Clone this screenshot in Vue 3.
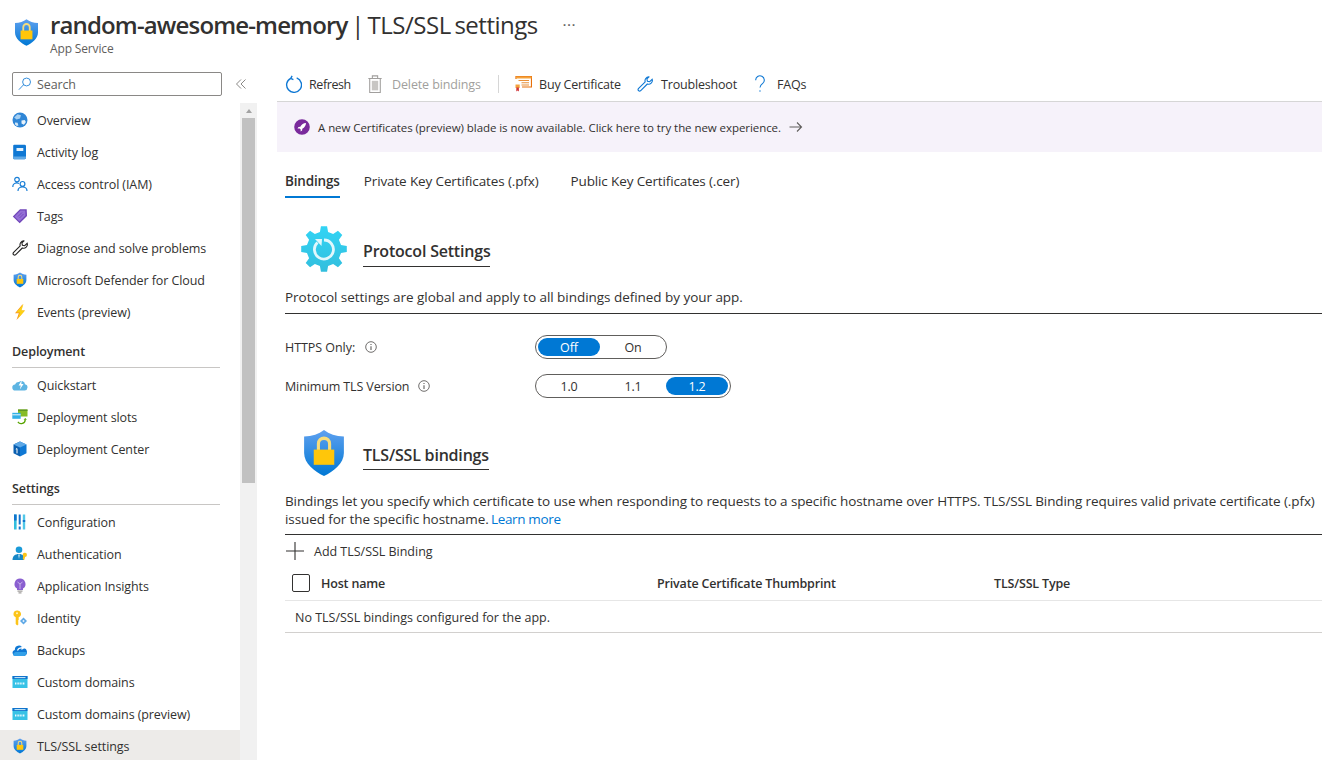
<script setup>
import { h } from 'vue'

const shield = [
  { d: 'M8 .6C6.3 1.9 4.2 2.6 1.6 2.7V8c0 3.4 3.4 6 6.4 7.4 3-1.4 6.4-4 6.4-7.4V2.7C11.8 2.6 9.7 1.9 8 .6z', fill: 'url(#shieldGrad)' },
  { d: 'M5.7 5v2.200h1V5.100a1.300 1.300 0 0 1 2.600 0v2.100h1V5a2.300 2.300 0 0 0-4.600 0z', fill: '#f7dc7a' },
  { d: 'M4.700 6.900h6.600v4.900H4.700z', fill: '#ffc60a' }
]

const wrenchD = 'M11.800 .9a3.800 3.800 0 0 0-3.600 5L1.400 12.700a1.500 1.500 0 0 0 2.100 2.100l6.800-6.800a3.800 3.800 0 0 0 4.900-4.700l-2.500 2.400-2.300-.5-.5-2.300 2.400-2.400z'

const paths = {
  shield,
  overview: [
    { d: 'M8 .5a7.500 7.500 0 1 0 0 15 7.500 7.500 0 0 0 0-15z', fill: '#2f86d6' },
    { d: 'M5.500 2.200 9 3.200 8 6.600 4.500 7.400 2.200 5.600z', fill: '#a5cff2' },
    { d: 'M9.500 8.500l3.200-.6 1.200 2.200-2 2.600-2.400-1.200z', fill: '#e8f3fb' },
    { d: 'M3 10.500l2.600.2.8 2.800-1.600.4L3 12.600z', fill: '#cfe6f8' }
  ],
  activity: [
    { d: 'M2.200 .8h10.400a1.400 1.400 0 0 1 1.400 1.400v11.600a1.400 1.400 0 0 1-1.400 1.400H2.200a1 1 0 0 1-1-1V1.800a1 1 0 0 1 1-1z', fill: '#0f78d4' },
    { d: 'M1.200 12.400h12.800v1.400a1.400 1.400 0 0 1-1.400 1.400H2.200a1 1 0 0 1-1-1z', fill: '#5ea8e6' },
    { d: 'M4.500 4h6.800v3H4.500z', fill: '#e4f1fb' }
  ],
  access: [
    { d: 'M5 1.300a2.300 2.300 0 1 0 0 4.600 2.300 2.300 0 0 0 0-4.600zM.8 11c0-3 1.800-4 4.200-4 .8 0 1.500.1 2 .4M10.500 5.500a2.400 2.400 0 1 0 0 4.800 2.400 2.400 0 0 0 0-4.800zM6 15c0-2.800 1.800-4 4.500-4s4.500 1.200 4.500 4', stroke: '#1a7fd6', sw: 1.200 }
  ],
  tags: [
    { d: 'M.8 8.500 8 1.200l6.700.1.300 6.700-7.300 7.200z', fill: '#6f44b8' },
    { d: 'M2.500 8.500 8.500 2.500l4.800.1.200 4.800-6 6z', fill: '#9470d6' },
    { d: 'M6 8.500l4-4M7.500 10l4-4', stroke: '#6f44b8', sw: .8 }
  ],
  wrench: [{ d: wrenchD, stroke: '#252423', sw: 1.100 }],
  wrenchBlue: [{ d: wrenchD, stroke: '#0f78d4', sw: 1.100 }],
  events: [
    { d: 'M10.800 0 3 9.200h3.800L4.500 16 12.800 6.500H8.800z', fill: '#f7941d' },
    { d: 'M11.500 0 4.300 8.600h3.600L5.900 14.800 13 6.500H9.500z', fill: '#fcd116' }
  ],
  quick: [
    { d: 'M3.500 13.500a3 3 0 0 1-.4-6A3.400 3.400 0 0 1 7 5a3.600 3.600 0 0 1 6 2.200 3.200 3.200 0 0 1-.3 6.300z', fill: '#5db4e2' },
    { d: 'M9.800 3 6.600 8.500h2.200L7.800 12.500 11.500 7H9.300z', fill: '#fff' }
  ],
  slots: [
    { d: 'M6 .5h9.500v7H6z', fill: '#86bc25' },
    { d: 'M6 .5h9.500v1.500H6z', fill: '#5e9624' },
    { d: 'M.3 3.800h8.400v6H.3z', fill: '#32b0e7' },
    { d: 'M.3 5.300h8.400v1H.3z', fill: '#e6f6fb' },
    { d: 'M13.200 10.500a4 4 0 0 1-7.300 2.400', stroke: '#57a300', sw: 1.300 },
    { d: 'M11.600 10.700l1.700-1.700 1.600 1.700z', fill: '#57a300' }
  ],
  center: [
    { d: 'M8 .5l6.500 3v8.800L8 15.500z', fill: '#0f78d4' },
    { d: 'M8 .5 1.500 3.500v8.800L8 15.500z', fill: '#0a5fb0' },
    { d: 'M8 .5l6.500 3L8 6.500 1.500 3.500z', fill: '#5ea8e6' },
    { d: 'M3.800 8.200l1.200-.6v4.800', stroke: '#fff', sw: 1 }
  ],
  config: [
    { d: 'M3.300 .5v15', stroke: '#32bedd', sw: 2.600 },
    { d: 'M3.300 .5v6', stroke: '#1173cd', sw: 2.600 },
    { d: 'M7.700 .5v10M7.700 12.500v3', stroke: '#1173cd', sw: 2 },
    { d: 'M12 .5v15', stroke: '#50c7e8', sw: 2.400 },
    { d: 'M12 6v2', stroke: '#1173cd', sw: 2.400 }
  ],
  auth: [
    { d: 'M7 .5a3.300 3.300 0 1 0 0 6.600A3.300 3.300 0 0 0 7 .5z', fill: '#1a9ad8' },
    { d: 'M.5 14c0-4 2.500-6 6.500-6s5 2 5 6z', fill: '#1787c6' },
    { d: 'M6.200 8.500h1.600L7 13z', fill: '#d6f1fb' },
    { d: 'M12.600 6.800a1.900 1.900 0 0 0-1.500 3l-.3 3.200 1.100 1 1-1-.4-.8.6-.6-.3-.7a1.900 1.900 0 0 0 .2-4.100z', fill: '#fcc419' }
  ],
  insights: [
    { d: 'M8 .5a5.500 5.500 0 0 0-3 10.100V12h6v-1.400A5.500 5.500 0 0 0 8 .5z', fill: '#8a5fd0' },
    { d: 'M5.500 12.500h5v1.200h-5zM6.500 14.200h3v1.300h-3z', fill: '#a19f9d' },
    { d: 'M5.500 4l2.500 2 2.500-2M8 6v5', stroke: '#d7c6f0', sw: .8 }
  ],
  identity: [
    { d: 'M5 .5a3.500 3.500 0 0 0-1.300 6.750V14l1.500 1.500 1.500-1.500-.9-1 .9-1-.9-1 .9-1V7.250A3.500 3.500 0 0 0 5 .5z', fill: '#fcc419' },
    { d: 'M5 2.300a1 1 0 1 0 0 2 1 1 0 0 0 0-2z', fill: '#fff4c2' },
    { d: 'M11.500 7.500l3.500 3.500-3.500 3.500L8 11z', fill: '#5ea8e6' },
    { d: 'M11.500 9.800l1.200 1.200-1.200 1.200-1.200-1.200z', fill: '#e4f1fb' }
  ],
  backups: [
    { d: 'M3.500 14a3 3 0 0 1-.7-5.900A4.500 4.500 0 0 1 7 3.500a4.300 4.300 0 0 1 4.100 2.800A3.900 3.900 0 0 1 12 14z', fill: '#0f78d4' },
    { d: 'M1 13c.2-2.500 2.500-3 4-3h9.500a3.900 3.900 0 0 1-2.500 4H3.500A3 3 0 0 1 1 13z', fill: '#32a0e8' },
    { d: 'M5.500 8.500c.7-2 2.500-2.800 4.500-2.600', stroke: '#fff', sw: 1.100 },
    { d: 'M9.500 3.800l3 2.100-3 2.100z', fill: '#fff' }
  ],
  domains: [
    { d: 'M.5 2h15v12H.5z', fill: '#37c2e6' },
    { d: 'M.5 2h15v3H.5z', fill: '#1173cd' },
    { d: 'M2.500 3.100h11v1h-11z', fill: '#cdeefa' },
    { d: 'M3 9.500h10', stroke: '#eafaff', sw: 2, dash: '1 .6' }
  ],
  refresh: [
    { d: 'M5.400 2.600A7 7 0 1 0 11 2.300', stroke: '#0f78d4', sw: 1.300 },
    { d: 'M6.700.3 5.400 2.700l2.500 1.100', stroke: '#0f78d4', sw: 1.300 }
  ],
  trash: [
    { d: 'M1.700 3.300h12.600M5.500 3.200V.8h5v2.400M3 3.300v13.200h10V3.300', stroke: '#a19f9d', sw: 1 },
    { d: 'M5 5.500h6v9H5z', fill: '#c8c6c4' }
  ],
  cert: [
    { d: 'M2 4V1.500h15.500v10.500H8', stroke: '#e8700a', sw: 1.200 },
    { d: 'M2 1.500h15.500v2H2z', fill: '#f4a23c' },
    { d: 'M4.500 5h10.500v1H4.500zM7.500 7.200h7.500v1H7.500zM7.500 9.400h7.500v1H7.500z', fill: '#e8903a' },
    { d: 'M1.500 9.500h4.200v3.500H1.500z', fill: '#f4a23c' },
    { d: 'M2.300 12.500h2.600v4l-1.300-1-1.300 1z', fill: '#d13438' }
  ],
  question: [
    { d: 'M3.200 4.800a4.300 4.300 0 1 1 6.800 3.300C8.500 9.200 7.500 9.900 7.500 12', stroke: '#0f78d4', sw: 1.100 },
    { d: 'M7.500 14.800a.7.700 0 1 0 0 1.400.7.700 0 0 0 0-1.400z', fill: '#0f78d4' }
  ],
  rocket: [
    { d: 'M8 .2a7.800 7.800 0 1 0 0 15.600A7.800 7.800 0 0 0 8 .2z', fill: '#7a2a9c' },
    { d: 'M12 4c-2.500.100-4.500 1.300-5.700 3.800L4.500 8l-1 1.500 2.200-.1 1 1-.1 2.200 1.500-1 .200-1.800C10.700 8.500 11.900 6.500 12 4z', fill: '#fff' }
  ],
  arrow: [{ d: 'M.5 6h12M8 1.500 12.500 6 8 10.500', stroke: '#605e5c', sw: 1.100 }],
  search: [
    { d: 'M9.800 1.200a4.500 4.500 0 1 0 0 9 4.500 4.500 0 0 0 0-9zM6.500 8.700 1 14.500', stroke: '#1a7fd6', sw: 1 }
  ],
  collapse: [{ d: 'M7 2.500 2.500 7 7 11.500M11.500 2.500 7 7l4.500 4.500', stroke: '#8a8886', sw: 1 }],
  info: [
    { d: 'M6 .7a5.300 5.300 0 1 0 0 10.600A5.300 5.300 0 0 0 6 .7z', stroke: '#605e5c', sw: .9 },
    { d: 'M6 5.200v3.800M6 3.100v1', stroke: '#605e5c', sw: 1.100 }
  ],
  plus: [{ d: 'M9 0v18M0 9h18', stroke: '#323130', sw: 1.100 }]
}

const Ico = (props) => {
  const list = paths[props.name]
  const box = props.box || 16
  return h('svg', {
    width: props.w || box,
    height: props.h || box,
    viewBox: props.vb || `0 0 ${box} ${box}`,
    style: { display: 'block', flex: 'none' }
  }, list.map((p) => h('path', {
    d: p.d, fill: p.fill || 'none', stroke: p.stroke || 'none', 'stroke-width': p.sw || 0, 'stroke-dasharray': p.dash || null
  })))
}
Ico.props = ['name', 'box', 'w', 'h', 'vb']

const groups = [
  { items: [
    ['Overview', 'overview'], ['Activity log', 'activity'], ['Access control (IAM)', 'access'], ['Tags', 'tags'],
    ['Diagnose and solve problems', 'wrench'], ['Microsoft Defender for Cloud', 'shield'], ['Events (preview)', 'events']
  ] },
  { title: 'Deployment', items: [['Quickstart', 'quick'], ['Deployment slots', 'slots'], ['Deployment Center', 'center']] },
  { title: 'Settings', items: [
    ['Configuration', 'config'], ['Authentication', 'auth'], ['Application Insights', 'insights'], ['Identity', 'identity'],
    ['Backups', 'backups'], ['Custom domains', 'domains'], ['Custom domains (preview)', 'domains'], ['TLS/SSL settings', 'shield']
  ] }
]

function gearPath(cx, cy, ro, ri, n) {
  const pts = []
  const step = (Math.PI * 2) / n
  for (let i = 0; i < n; i++) {
    const a = i * step - Math.PI / 2
    const w = step * 0.17
    const v = step * 0.3
    pts.push([cx + ri * Math.cos(a - v), cy + ri * Math.sin(a - v)])
    pts.push([cx + ro * Math.cos(a - w), cy + ro * Math.sin(a - w)])
    pts.push([cx + ro * Math.cos(a + w), cy + ro * Math.sin(a + w)])
    pts.push([cx + ri * Math.cos(a + v), cy + ri * Math.sin(a + v)])
  }
  return 'M' + pts.map((p) => p[0].toFixed(2) + ' ' + p[1].toFixed(2)).join('L') + 'Z'
}
const gear = gearPath(23, 23, 23, 17.5, 8)
</script>

<template>
  <div class="page">
    <svg class="defs" width="0" height="0">
      <defs>
        <linearGradient id="shieldGrad" x1="0" y1="0" x2="0" y2="1">
          <stop offset="0" stop-color="#5ea0ef" />
          <stop offset="1" stop-color="#0078d4" />
        </linearGradient>
        <linearGradient id="gearGrad" x1="0" y1="0" x2="0" y2="1">
          <stop offset="0" stop-color="#32d4f5" />
          <stop offset="1" stop-color="#32bedd" />
        </linearGradient>
      </defs>
    </svg>

    <header class="head">
      <Ico class="head-icon" name="shield" :w="23" :h="27" vb="1.6 .6 12.8 14.8" />
      <div class="head-text">
        <div class="title-row">
          <h1 class="title"><b>random-awesome-memory</b> | TLS/SSL settings</h1>
          <span class="dots">···</span>
        </div>
        <div class="subtitle">App Service</div>
      </div>
    </header>

    <div class="body">
      <aside class="side">
        <div class="search-row">
          <div class="search">
            <Ico name="search" :w="14" :h="14" />
            <span>Search</span>
          </div>
          <Ico class="collapse" name="collapse" :w="14" :h="14" vb="0 0 14 14" />
        </div>
        <div class="side-scroll">
          <nav class="nav">
            <section v-for="(g, gi) in groups" :key="gi">
              <div v-if="g.title" class="group-title">{{ g.title }}</div>
              <div
                v-for="it in g.items"
                :key="it[0]"
                class="nav-item"
                :class="{ active: it[0] === 'TLS/SSL settings' }"
              >
                <Ico :name="it[1]" />
                <span>{{ it[0] }}</span>
              </div>
            </section>
          </nav>
          <div class="scrollbar">
            <div class="scroll-arrow"></div>
            <div class="scroll-thumb"></div>
          </div>
        </div>
      </aside>

      <main class="main">
        <div class="toolbar">
          <div class="tool first"><Ico name="refresh" :w="17" :h="18" /><span>Refresh</span></div>
          <div class="tool off"><Ico name="trash" :w="14" :h="18" vb="1.500 0 13 17" /><span>Delete bindings</span></div>
          <div class="tool-sep"></div>
          <div class="tool"><Ico name="cert" :w="18" :h="18" vb="0 0 18 18" /><span>Buy Certificate</span></div>
          <div class="tool wide"><Ico name="wrenchBlue" /><span>Troubleshoot</span></div>
          <div class="tool"><Ico name="question" :w="15" :h="18" vb="2.500 0 15 17" /><span>FAQs</span></div>
        </div>

        <div class="banner">
          <Ico name="rocket" />
          <span>A new Certificates (preview) blade is now available. Click here to try the new experience.</span>
          <Ico name="arrow" :w="14" :h="12" vb="0 0 14 12" />
        </div>

        <div class="content">
          <div class="tabs">
            <div class="tab on">Bindings</div>
            <div class="tab">Private Key Certificates (.pfx)</div>
            <div class="tab">Public Key Certificates (.cer)</div>
          </div>

          <div class="sec-head sec-protocol">
            <svg class="gear" width="46" height="46" viewBox="0 0 46 46">
              <path :d="gear" fill="url(#gearGrad)" />
              <path d="M16.500 16.500a9.500 9.500 0 1 0 6.500-2.500" fill="none" stroke="#fff" stroke-opacity=".85" stroke-width="2.800" />
              <path d="M14 13l7 0-.5 7z" fill="#fff" fill-opacity=".85" />
            </svg>
            <h2 class="sec-title">Protocol Settings</h2>
          </div>
          <p class="desc d1">Protocol settings are global and apply to all bindings defined by your app.</p>

          <div class="row r1">
            <div class="label">HTTPS Only:<Ico name="info" :w="12" :h="12" vb="0 0 12 12" /></div>
            <div class="toggle">
              <span class="seg sel">Off</span><span class="seg">On</span>
            </div>
          </div>
          <div class="row r2">
            <div class="label">Minimum TLS Version<Ico name="info" :w="12" :h="12" vb="0 0 12 12" /></div>
            <div class="toggle">
              <span class="seg">1.0</span><span class="seg">1.1</span><span class="seg sel">1.2</span>
            </div>
          </div>

          <div class="sec-head sec-tls">
            <Ico class="big-shield" name="shield" :w="40" :h="46" vb="1.6 .6 12.8 14.8" />
            <h2 class="sec-title">TLS/SSL bindings</h2>
          </div>
          <p class="desc d2">
            Bindings let you specify which certificate to use when responding to requests to a specific hostname over HTTPS. TLS/SSL Binding requires valid private certificate (.pfx)<br />
            issued for the specific hostname. <a class="link">Learn more</a>
          </p>

          <div class="add">
            <Ico name="plus" :w="18" :h="18" vb="0 0 18 18" />
            <span>Add TLS/SSL Binding</span>
          </div>
          <div class="thead">
            <div class="host"><span class="check"></span>Host name</div>
            <div>Private Certificate Thumbprint</div>
            <div>TLS/SSL Type</div>
          </div>
          <div class="empty">No TLS/SSL bindings configured for the app.</div>
        </div>
      </main>
    </div>
  </div>
</template>

<style>
html, body { margin: 0; background: #fff; overflow: hidden; }
</style>

<style scoped>
.page {
  width: 1322px;
  height: 760px;
  overflow: hidden;
  font-family: "Open Sans", "Noto Sans", sans-serif;
  font-size: 12.5px;
  letter-spacing: -0.12px;
  color: #323130;
  background: #fff;
}
.defs { display: block; }

.head { height: 66px; display: flex; box-sizing: border-box; padding: 13px 0 0 15px; }
.head-icon { margin-top: 6px; }
.head-text { margin-left: 12px; }
.title-row { display: flex; align-items: center; height: 24px; }
.title { margin: 0; font-size: 24px; font-weight: 400; line-height: 24px; letter-spacing: -0.5px; word-spacing: -2px; white-space: nowrap; }
.title b { font-weight: 600; letter-spacing: -0.85px; }
.dots { margin-left: 25px; font-size: 13px; color: #605e5c; font-weight: 600; letter-spacing: 1px; }
.subtitle { margin-top: 4px; font-size: 12px; line-height: 16px; color: #605e5c; letter-spacing: -0.15px; }

.body { display: flex; height: 694px; }
.side { width: 257px; flex: none; display: flex; flex-direction: column; }
.search-row { height: 37px; flex: none; box-sizing: border-box; padding: 6px 0 0 12px; display: flex; }
.search {
  width: 210px; height: 24px; box-sizing: border-box;
  border: 1px solid #8a8886; border-radius: 2px;
  display: flex; align-items: center; gap: 5px; padding-left: 5px; color: #605e5c;
}
.collapse { margin: 5px 0 0 12px; }
.side-scroll { flex: 1; display: flex; min-height: 0; }
.nav { width: 240px; flex: none; padding-top: 1px; letter-spacing: -0.09px; }
.group-title {
  margin: 0 20px 1px 12px; height: 40px; box-sizing: border-box; padding-top: 15px;
  line-height: 18px; font-weight: 600; border-bottom: 1px solid #c8c6c4;
}
.nav-item { height: 32px; display: flex; align-items: center; gap: 9px; padding-left: 12px; white-space: nowrap; }
.nav-item.active { background: #edebe9; }
.scrollbar { width: 17px; background: #f1f1f1; display: flex; flex-direction: column; align-items: center; }
.scroll-arrow {
  width: 0; height: 0; margin: 6px 0 5px;
  border-left: 3.500px solid transparent; border-right: 3.500px solid transparent; border-bottom: 4px solid #a3a3a3;
}
.scroll-thumb { width: 13px; height: 365px; background: #c1c1c1; }

.main { flex: 1; margin-left: 20px; min-width: 0; }
.toolbar {
  height: 36px; box-sizing: border-box; border-bottom: 1px solid #d6d6d6;
  display: grid; grid-template-columns: 83px 130px 16px 123px 118px 1fr; padding: 1px 0 0 8px; align-items: center;
  letter-spacing: -0.18px;
}
.tool { display: flex; align-items: center; gap: 7px; white-space: nowrap; }
.tool.first { letter-spacing: -0.4px; }
.tool.off { color: #a19f9d; gap: 10px; letter-spacing: -0.12px; }
.tool.wide { gap: 8px; }
.tool-sep { width: 1px; height: 18px; background: #d6d6d6; }
.banner {
  height: 50px; background: #f6f2fa; display: flex; align-items: center;
  padding-left: 17px; gap: 8px; font-size: 11.500px; letter-spacing: -0.065px;
}
.content { padding-left: 8px; }
.tabs { margin-top: 18px; display: flex; gap: 24px; height: 28px; font-size: 13.500px; letter-spacing: -0.13px; }
.tab { line-height: 22px; height: 28px; box-sizing: border-box; white-space: nowrap; }
.tab + .tab + .tab { margin-left: 8px; }
.tab.on { font-weight: 600; border-bottom: 2px solid #0078d4; letter-spacing: -0.16px; }

.sec-head { display: flex; height: 46px; }
.sec-protocol { margin-top: 28px; padding-left: 16px; }
.gear { flex: none; margin-right: 16px; }
.sec-tls { margin-top: 32px; padding-left: 19px; }
.big-shield { margin-right: 20px; }
.sec-title {
  margin: 14px 0 0; font-size: 16px; font-weight: 600; line-height: 22px; height: 27px;
  box-sizing: border-box; border-bottom: 1px solid #323130; letter-spacing: -0.2px; white-space: nowrap;
}
.sec-tls .sec-title { height: 26px; margin-left: -1px; }
.desc { margin: 16px 0 0; line-height: 18px; font-size: 13.500px; border-bottom: 1px solid #323130; white-space: nowrap; }
.d1 { padding-bottom: 7px; letter-spacing: -0.04px; }
.d2 { padding-bottom: 6px; letter-spacing: -0.1px; }
.link { color: #0078d4; letter-spacing: -0.35px; margin-left: -1px; }

.row { display: flex; align-items: center; height: 24px; }
.r1 { margin-top: 21px; }
.r2 { margin-top: 15px; }
.label { width: 250px; flex: none; display: flex; align-items: center; gap: 9px; white-space: nowrap; }
.r1 .label { gap: 10px; letter-spacing: -0.05px; }
.toggle {
  box-sizing: border-box; height: 24px; border: 1px solid #605e5c; border-radius: 12px;
  padding: 2px 1px; display: flex;
}
.seg { width: 62px; margin: 0 1px; height: 18px; line-height: 19px; text-align: center; border-radius: 9px; }
.seg.sel { background: #0078d4; color: #fff; }

.add { height: 31px; display: flex; align-items: center; gap: 10px; padding-left: 1px; letter-spacing: -0.02px; }
.add span { padding-top: 1px; }
.thead {
  height: 35px; box-sizing: border-box; border-bottom: 1px solid #e6e6e6;
  display: grid; grid-template-columns: 372px 337px 1fr; align-items: center; font-weight: 600; white-space: nowrap;
  letter-spacing: -0.17px;
}
.host { display: flex; align-items: center; padding-left: 7px; }
.check {
  width: 18px; height: 18px; box-sizing: border-box; border: 1px solid #323130; border-radius: 2px; margin-right: 11px;
}
.empty {
  height: 32px; box-sizing: border-box; padding-left: 10px; line-height: 33px; letter-spacing: -0.01px;
  border-bottom: 1px solid #d2d0ce;
}
</style>
